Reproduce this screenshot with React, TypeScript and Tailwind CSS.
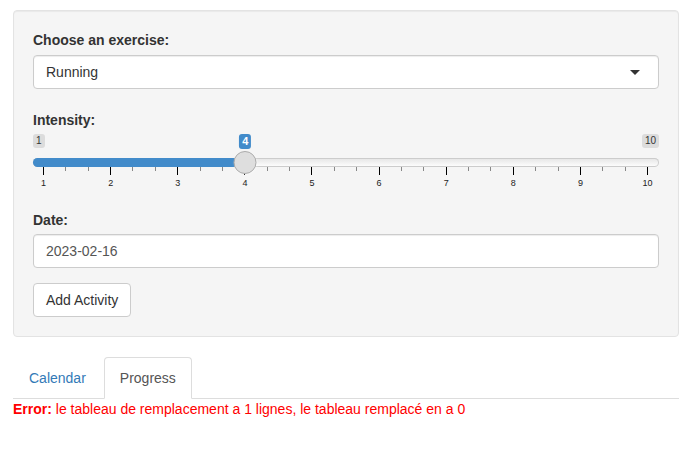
import React from "react";

const font = { fontFamily: '"Liberation Sans", Arial, Helvetica, sans-serif' };

function Slider() {
  const W = 626;
  const H = 22;
  const usable = W - H;
  const step = usable / 9;
  const pos = (v: number) => H / 2 + (v - 1) * step;
  const majors = Array.from({ length: 10 }, (_, i) => i + 1);
  const minors: number[] = [];
  for (let i = 1; i < 10; i++) minors.push(i + 1 / 3, i + 2 / 3);
  const handleX = pos(4);
  return (
    <div className="flex h-[60px] w-full flex-col pt-[4px]">
      <div className="relative flex h-[14px] items-start justify-between">
        <span className="rounded-[3px] bg-black/10 px-[3px] text-[10px] leading-[14px] text-[#333]">1</span>
        <span className="rounded-[3px] bg-black/10 px-[3px] text-[10px] leading-[14px] text-[#333]">10</span>
        <span
          className="absolute top-0 h-[15px] -translate-x-1/2 rounded-[3px] bg-[#428bca] px-[3px] text-[11px] font-bold leading-[15px] text-white"
          style={{ left: handleX }}
        >
          4
        </span>
      </div>
      <div className="relative mt-[10px] flex h-[9px] rounded-[8px] bg-gradient-to-b from-[#e4e4e4] to-white shadow-[inset_0_0_0_1px_#cccccc]">
        <div className="h-full rounded-l-[8px] bg-[#428bca]" style={{ width: handleX }} />
        <div
          className="absolute top-[-7px] h-[23px] w-[23px] -translate-x-1/2 rounded-full border border-[#ababab] bg-[#dedede] shadow-[1px_1px_3px_rgba(255,255,255,0.3)]"
          style={{ left: handleX }}
        />
      </div>
      <svg width={W} height="8" className="block">
        {majors.map((v) => (
          <rect key={"M" + v} x={Math.round(pos(v)) - 1} y={0} width={1} height={8} fill="#000" />
        ))}
        {minors.map((v, i) => (
          <rect key={"m" + i} x={Math.round(pos(v)) - 1} y={0} width={1} height={4} fill="#888" />
        ))}
      </svg>
      <div className="ml-[-23px] mt-[3px] flex">
        {majors.map((v) => (
          <span key={"t" + v} className="w-[67.11px] shrink-0 text-center text-[9px] leading-[10px] text-[#222]">
            {v}
          </span>
        ))}
      </div>
    </div>
  );
}

export default function App() {
  return (
    <div className="min-h-[462px] bg-white pl-[13px] pt-[10px] text-[14px] leading-[20px] text-[#333]" style={font}>
      <div className="flex w-[666px] flex-col rounded-[4px] border border-[#e3e3e3] bg-[#f5f5f5] p-[19px] shadow-[inset_0_1px_1px_rgba(0,0,0,0.05)]">
        <label className="mb-[5px] font-bold">Choose an exercise:</label>
        <div className="flex h-[34px] items-center justify-between rounded-[4px] border border-[#cccccc] bg-white pl-[12px] pr-[18px] shadow-[inset_0_1px_1px_rgba(0,0,0,0.075)]">
          <span>Running</span>
          <svg width="10" height="5" viewBox="0 0 10 5">
            <path d="M0 0 L10 0 L5 5 Z" fill="#333" />
          </svg>
        </div>
        <label className="mt-[21px] font-bold">Intensity:</label>
        <Slider />
        <label className="mt-[20px] mb-[4px] font-bold">Date:</label>
        <div className="flex h-[34px] items-center rounded-[4px] border border-[#cccccc] bg-white px-[12px] text-[#555] shadow-[inset_0_1px_1px_rgba(0,0,0,0.075)]">
          2023-02-16
        </div>
        <div className="mt-[15px] flex">
          <div className="flex h-[34px] items-center rounded-[4px] border border-[#cccccc] bg-white px-[12px] text-[#333]">
            Add Activity
          </div>
        </div>
      </div>
      <div className="mt-[20px] flex w-[666px] border-b border-[#dddddd]">
        <div className="mr-[2px] -mb-px rounded-t-[4px] border border-transparent px-[15px] py-[10px] text-[#337ab7]">
          Calendar
        </div>
        <div className="-mb-px rounded-t-[4px] border border-[#dddddd] border-b-transparent bg-white px-[15px] py-[10px] text-[#555]">
          Progress
        </div>
      </div>
      <div className="text-[#ff0000]">
        <span className="font-bold">Error:</span> le tableau de remplacement a 1 lignes, le tableau remplacé en a 0
      </div>
    </div>
  );
}
